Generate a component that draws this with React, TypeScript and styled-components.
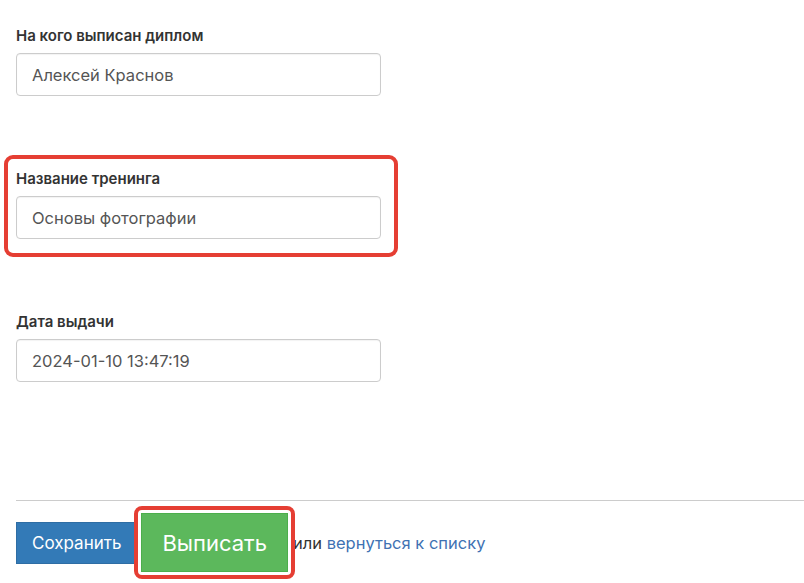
import React from 'react';
import styled, { createGlobalStyle } from 'styled-components';

const GlobalStyle = createGlobalStyle`
  html, body {
    margin: 0;
    padding: 0;
    background: #fff;
  }
  body {
    font-family: Inter, "Noto Sans", "Liberation Sans", sans-serif;
    color: #333;
  }
`;

const Page = styled.div`
  padding: 26px 0 0 16px;
`;

const Form = styled.form`
  display: flex;
  flex-direction: column;
  gap: 73px;
  width: 365px;
`;

const Label = styled.label`
  display: block;
  font-size: 15px;
  font-weight: 600;
  line-height: 20px;
  color: #333;
  margin-bottom: 7px;
`;

const Input = styled.input`
  display: block;
  box-sizing: border-box;
  width: 100%;
  height: 43px;
  padding: 0 15px;
  border: 1px solid #ccc;
  border-radius: 4px;
  box-shadow: inset 0 1px 1px rgba(0, 0, 0, 0.05);
  font-family: inherit;
  font-size: 16.5px;
  color: #555;
  background: #fff;
  outline: none;
`;

const Highlight = styled.div<{ $top: number; $right: number; $bottom: number; $left: number; $radius: number }>`
  position: relative;
  &::after {
    content: '';
    position: absolute;
    top: ${({ $top }) => -$top}px;
    right: ${({ $right }) => -$right}px;
    bottom: ${({ $bottom }) => -$bottom}px;
    left: ${({ $left }) => -$left}px;
    border: 4px solid #e53e33;
    border-radius: ${({ $radius }) => $radius}px;
    pointer-events: none;
  }
`;

const Divider = styled.hr`
  margin: 118px 0 0 16px;
  border: 0;
  border-top: 1px solid #ccc;
  height: 0;
`;

const Actions = styled.div`
  display: flex;
  align-items: center;
  padding: 12px 0 12px 16px;
  font-size: 16.5px;
`;

const Button = styled.button<{ $variant: 'primary' | 'success' }>`
  display: block;
  box-sizing: border-box;
  border: 1px solid ${({ $variant }) => ($variant === 'primary' ? '#2e6da4' : '#4cae4c')};
  background: ${({ $variant }) => ($variant === 'primary' ? '#337ab7' : '#5cb85c')};
  color: #fff;
  font-family: inherit;
  font-size: ${({ $variant }) => ($variant === 'primary' ? 17 : 22)}px;
  height: ${({ $variant }) => ($variant === 'primary' ? 42 : 59)}px;
  padding: ${({ $variant }) => ($variant === 'primary' ? '0 15px' : '0 20px')};
  cursor: pointer;
`;

const ButtonSlot = styled.div<{ $gap: number }>`
  margin-left: ${({ $gap }) => $gap}px;
`;

const Hint = styled.span`
  margin-left: 5px;
  color: #333;
`;

const BackLink = styled.a`
  color: #3f72b3;
  text-decoration: none;
`;

const fields = [
  { id: 'owner', label: 'На кого выписан диплом', value: 'Алексей Краснов' },
  { id: 'training', label: 'Название тренинга', value: 'Основы фотографии', marked: true },
  { id: 'date', label: 'Дата выдачи', value: '2024-01-10 13:47:19' },
];

const App = () => (
  <>
    <GlobalStyle />
    <Page>
      <Form>
        {fields.map(({ id, label, value, marked }) => {
          const body = (
            <>
              <Label htmlFor={id}>{label}</Label>
              <Input id={id} defaultValue={value} />
            </>
          );
          return marked ? (
            <Highlight key={id} $top={14} $right={17} $bottom={18} $left={12} $radius={9}>
              {body}
            </Highlight>
          ) : (
            <div key={id}>{body}</div>
          );
        })}
      </Form>
    </Page>
    <Divider />
    <Actions>
      <Button type="button" $variant="primary">Сохранить</Button>
      <ButtonSlot $gap={4}>
        <Highlight $top={7} $right={7} $bottom={7} $left={7} $radius={8}>
          <Button type="button" $variant="success">Выписать</Button>
        </Highlight>
      </ButtonSlot>
      <Hint>
        или
        {' '}
        <BackLink href="#list">вернуться к списку</BackLink>
      </Hint>
    </Actions>
  </>
);

export default App;
